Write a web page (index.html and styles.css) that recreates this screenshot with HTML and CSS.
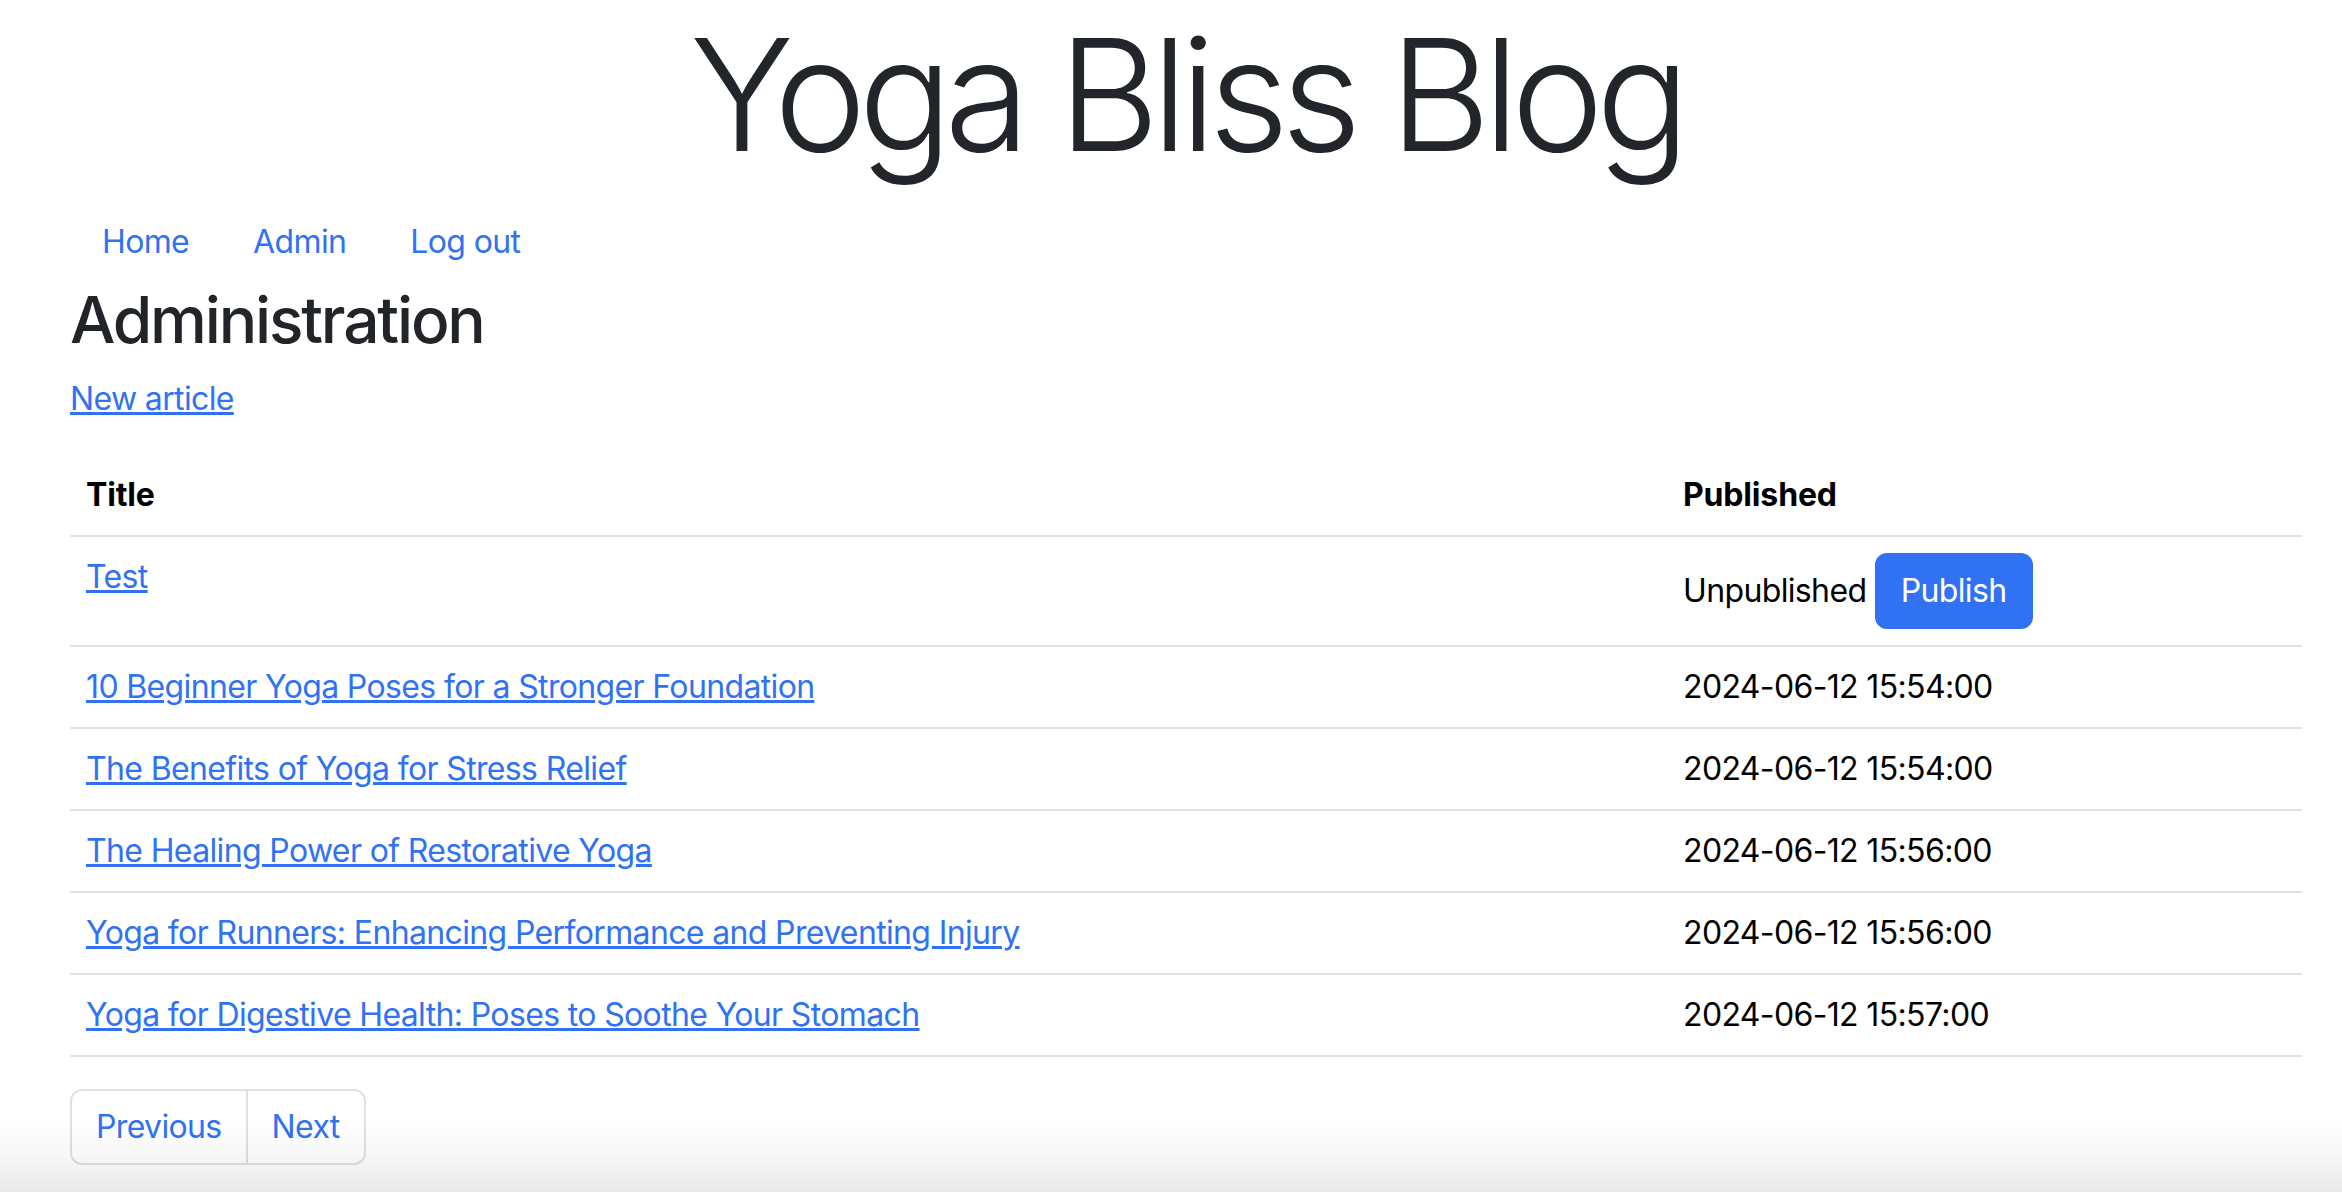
FILE: index.html
```html
<!DOCTYPE html>
<html lang="en">
<head>
<meta charset="utf-8">
<title>Yoga Bliss Blog</title>
<link rel="stylesheet" href="styles.css">
</head>
<body>
<div class="page">
  <h1 class="site-title">Yoga Bliss Blog</h1>
  <ul class="nav">
    <li><a class="nav-link" href="#">Home</a></li>
    <li><a class="nav-link" href="#">Admin</a></li>
    <li><a class="nav-link" href="#">Log out</a></li>
  </ul>
  <h2 class="section-title">Administration</h2>
  <p class="actions"><a href="#">New article</a></p>
  <table class="table">
    <thead>
      <tr><th>Title</th><th class="col-published">Published</th></tr>
    </thead>
    <tbody>
      <tr><td><a href="#">Test</a></td><td class="status">Unpublished <button class="btn">Publish</button></td></tr>
      <tr><td><a href="#">10 Beginner Yoga Poses for a Stronger Foundation</a></td><td>2024-06-12 15:54:00</td></tr>
      <tr><td><a href="#">The Benefits of Yoga for Stress Relief</a></td><td>2024-06-12 15:54:00</td></tr>
      <tr><td><a href="#">The Healing Power of Restorative Yoga</a></td><td>2024-06-12 15:56:00</td></tr>
      <tr><td><a href="#">Yoga for Runners: Enhancing Performance and Preventing Injury</a></td><td>2024-06-12 15:56:00</td></tr>
      <tr><td><a href="#">Yoga for Digestive Health: Poses to Soothe Your Stomach</a></td><td>2024-06-12 15:57:00</td></tr>
    </tbody>
  </table>
  <ul class="pagination">
    <li><a class="page-link" href="#">Previous</a></li>
    <li><a class="page-link" href="#">Next</a></li>
  </ul>
</div>
<div class="bottom-shade"></div>
</body>
</html>
```

FILE: styles.css
```css
*, *::before, *::after { box-sizing: border-box; }

html, body {
  margin: 0;
  padding: 0;
  background: #fff;
}

body {
  font-family: Inter, "Noto Sans", "Liberation Sans", sans-serif;
  font-size: 32px;
  line-height: 48px;
  letter-spacing: -0.02em;
  color: #212529;
}

a { color: #3172f4; }

.page {
  padding: 0 40px 0 70px;
}

.site-title {
  margin: 0 0 12px;
  font-size: 156px;
  font-weight: 300;
  line-height: 190px;
  letter-spacing: -0.051em;
  text-align: center;
  color: #222529;
}

.nav {
  list-style: none;
  margin: 0;
  padding: 0;
  display: flex;
}

.nav-link {
  display: block;
  padding: 16px 32px;
  text-decoration: none;
}

.section-title {
  margin: 0 0 16px;
  font-size: 64px;
  font-weight: 500;
  line-height: 1.2;
  letter-spacing: -0.034em;
  color: #212529;
}

.actions {
  margin: 0 0 32px;
}

.table {
  width: 100%;
  border-collapse: collapse;
  margin-bottom: 32px;
  color: #000;
}

.table th,
.table td {
  padding: 16px;
  border-bottom: 2px solid #dee2e6;
  text-align: left;
  vertical-align: top;
}

.table th {
  font-weight: 700;
  letter-spacing: -0.005em;
}

.col-published { width: 635px; }

.btn {
  font-family: inherit;
  font-size: 32px;
  line-height: 48px;
  letter-spacing: -0.02em;
  padding: 12px 24px;
  border: 2px solid #3172f4;
  border-radius: 12px;
  background: #3172f4;
  color: #fff;
  vertical-align: baseline;
}

.pagination {
  list-style: none;
  margin: 0;
  padding: 0;
  display: flex;
}

.page-link {
  display: block;
  padding: 12px 24px;
  border: 2px solid #dee2e6;
  background: #fff;
  text-decoration: none;
}

.pagination li:first-child .page-link {
  border-radius: 12px 0 0 12px;
}

.pagination li:last-child .page-link {
  margin-left: -2px;
  border-radius: 0 12px 12px 0;
}

.bottom-shade {
  position: fixed;
  left: 0;
  right: 0;
  bottom: 0;
  height: 72px;
  pointer-events: none;
  background: linear-gradient(to bottom, rgba(0,0,0,0) 0%, rgba(0,0,0,0.03) 50%, rgba(0,0,0,0.085) 100%);
}
```
